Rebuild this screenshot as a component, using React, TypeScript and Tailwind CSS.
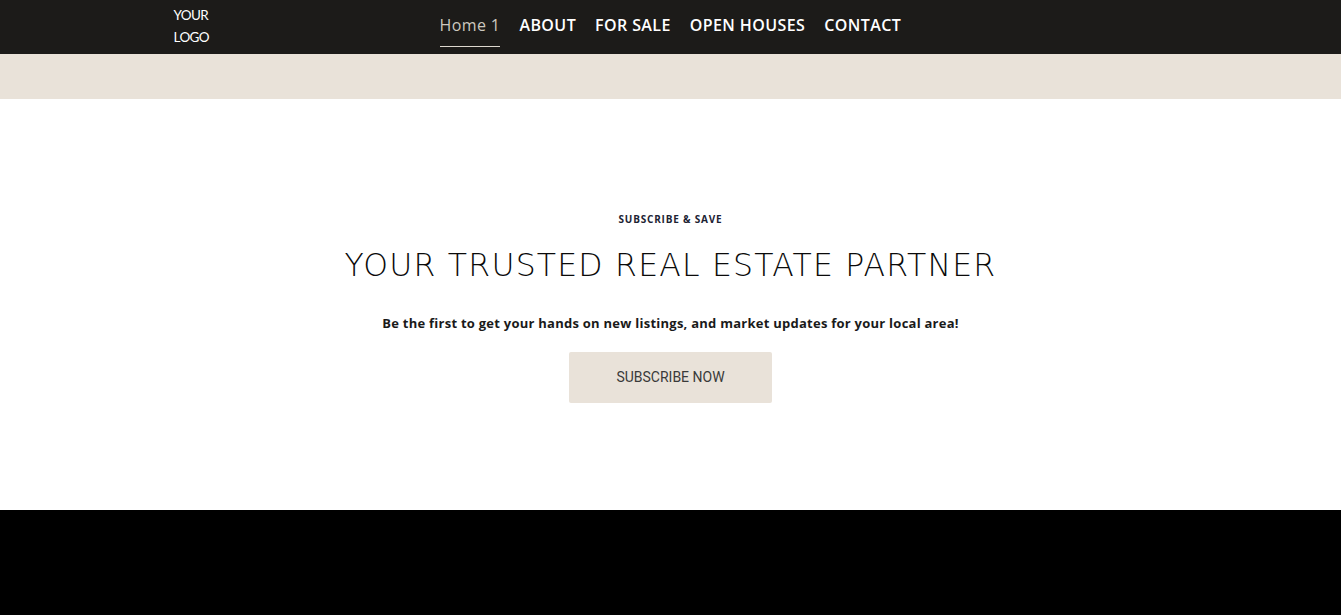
export default function App() {
  const links = ['ABOUT', 'FOR SALE', 'OPEN HOUSES', 'CONTACT'];
  return (
    <div className="min-h-screen bg-black">
      {/* Header */}
      <header className="h-[54px] bg-[#1c1b19]">
        <div className="w-[1000px] h-full mx-auto pl-[3px] flex items-start">
          <div className="self-center -mt-[2px] text-white text-[13.5px] leading-[22px] font-['Lato',sans-serif] tracking-[-0.6px] w-[266px]">
            <div>YOUR</div>
            <div>LOGO</div>
          </div>
          <nav className="flex items-start gap-[19px] font-['Open_Sans',sans-serif] font-semibold text-[16px] leading-[22px] tracking-[0.4px]">
            <a className="pt-[14px] pb-[10px] border-b border-[#ddd8cf] text-[#cdc8bf] font-medium">Home 1</a>
            {links.map((l) => (
              <a key={l} className="pt-[14px] pb-[10px] border-b border-transparent text-white">
                {l}
              </a>
            ))}
          </nav>
        </div>
      </header>

      {/* Beige band */}
      <div className="h-[45px] bg-[#e9e2d9]" />

      {/* Subscribe section */}
      <section className="h-[411px] bg-white flex flex-col items-center pt-[113px]">
        <p className="text-[10px] font-bold text-[#1c2333] font-['Open_Sans',sans-serif] tracking-[0.8px] leading-[14px]">
          SUBSCRIBE &amp; SAVE
        </p>
        <h1 className="mt-[19px] text-[31.5px] leading-[40px] font-extralight text-[#0a0a0a] font-['DejaVu_Sans',sans-serif] tracking-[1.2px]">
          YOUR TRUSTED REAL ESTATE PARTNER
        </h1>
        <p className="mt-[29px] text-[13px] font-bold text-[#1a1a1a] font-['Open_Sans',sans-serif] leading-[18px] tracking-[0.25px]">
          Be the first to get your hands on new listings, and market updates for your local area!
        </p>
        <button className="mt-[20px] w-[203px] h-[51px] bg-[#e9e2d9] rounded-[2px] text-[14px] text-[#3a3a3a] font-['Roboto',sans-serif]">
          SUBSCRIBE NOW
        </button>
      </section>

      {/* Footer */}
      <footer className="h-[105px] bg-black" />
    </div>
  );
}
